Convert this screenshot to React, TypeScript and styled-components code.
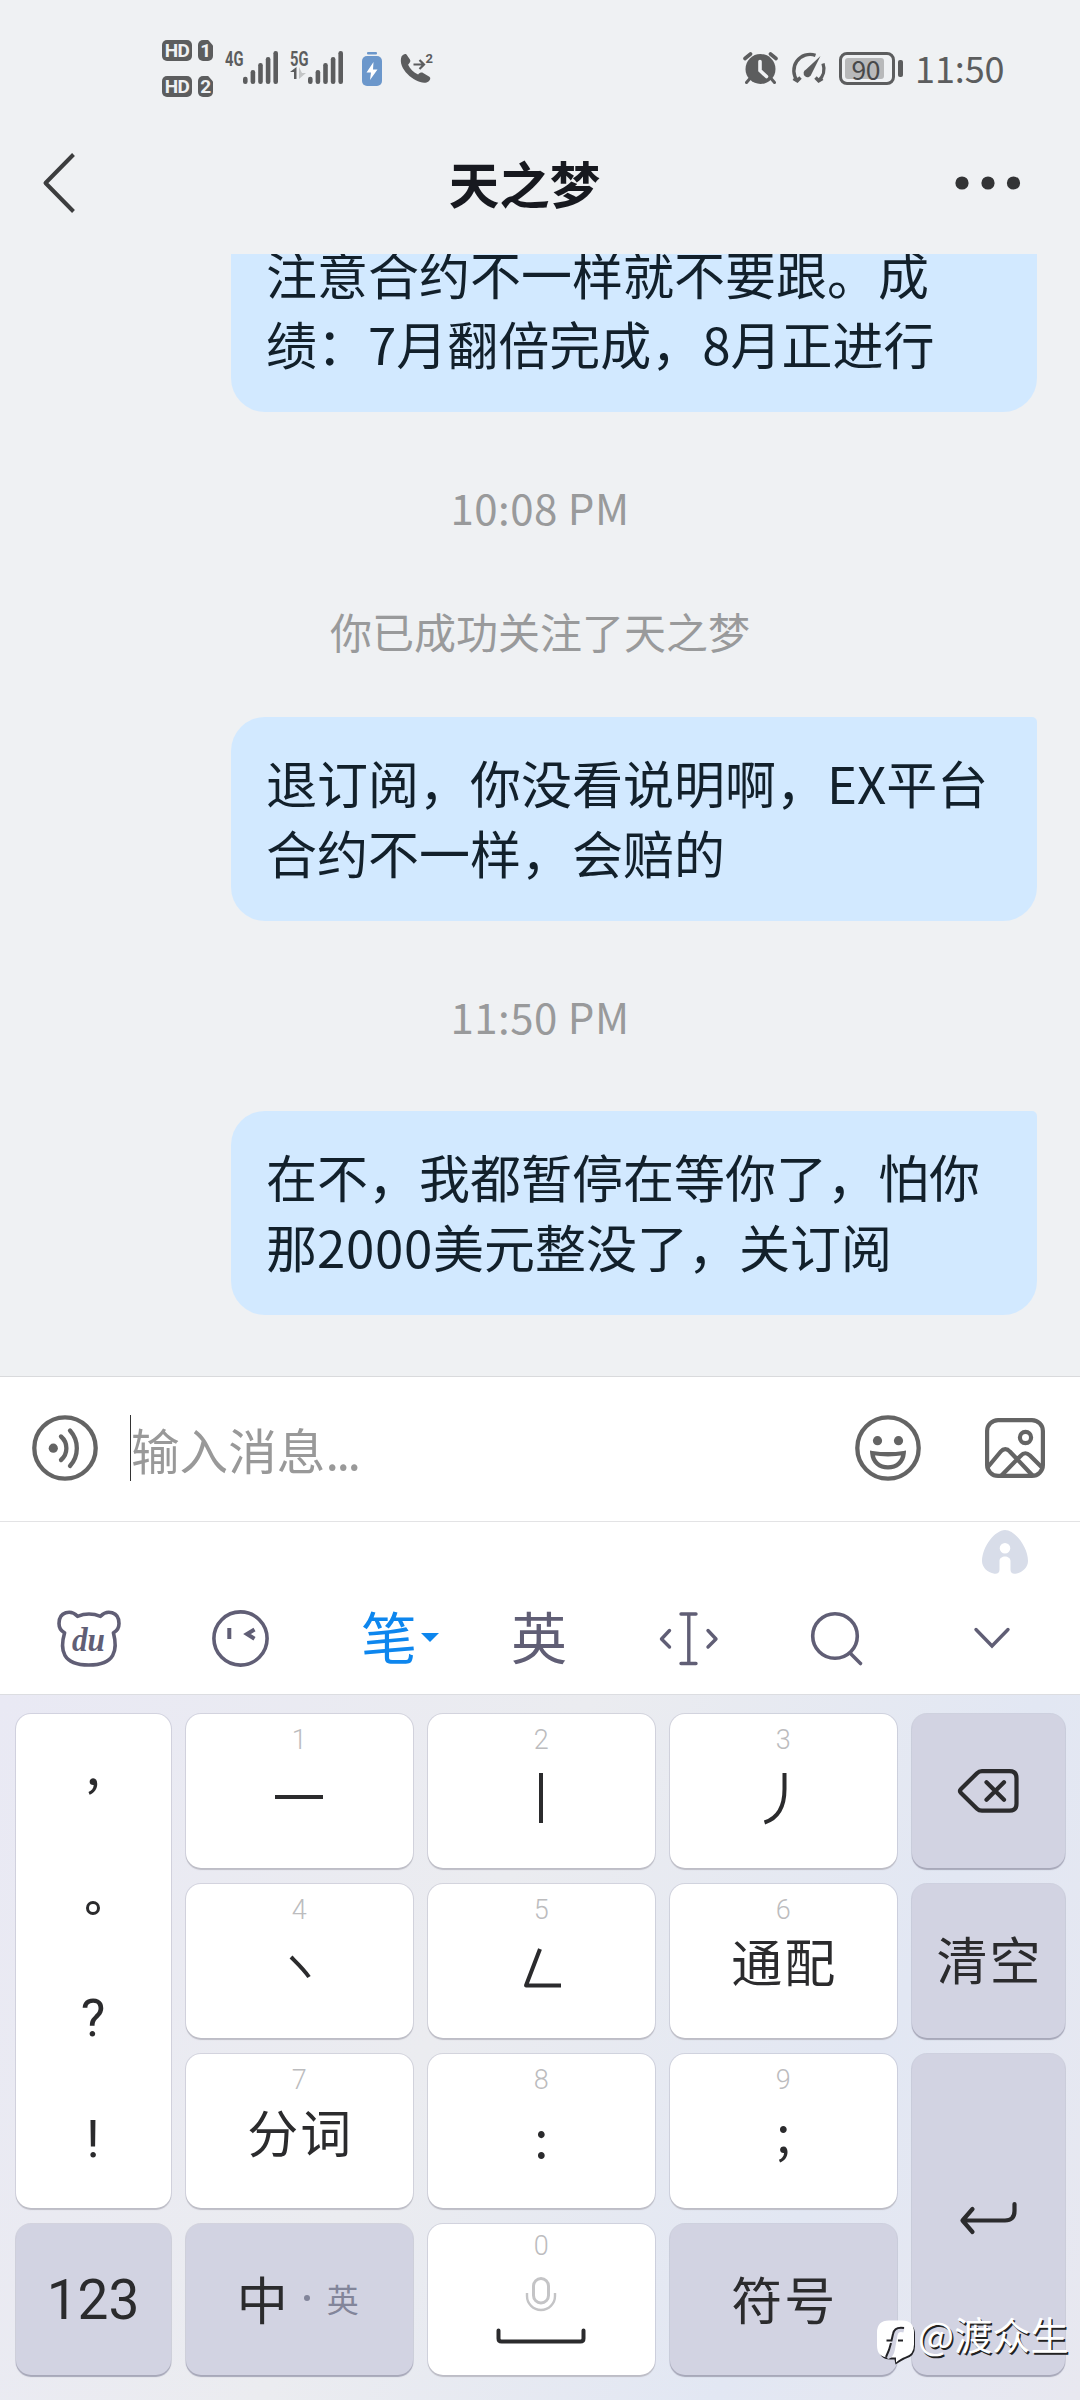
import React from "react";
import styled, { createGlobalStyle } from "styled-components";

const sans = `"Noto Sans CJK SC", "Noto Sans", sans-serif`;
const latin = `Roboto, "Noto Sans CJK SC", sans-serif`;
const grey = "#5c5d5e";
const slate = "#605e75";
const ink = "#2b2b2d";

const GlobalStyle = createGlobalStyle`
  * { box-sizing: border-box; }
  body { margin: 0; background: #eff1f3; }
  svg { display: block; flex: none; overflow: visible; }
`;

const Screen = styled.main`
  width: 1080px;
  height: 2400px;
  display: flex;
  flex-direction: column;
  overflow: hidden;
  position: relative;
  background: #eff1f3;
  font-family: ${sans};
`;

/* ---------- status bar ---------- */

const StatusBar = styled.header`
  height: 110px;
  flex: none;
  display: flex;
  justify-content: space-between;
  padding: 40px 79px 0 162px;
`;

const StatusGroup = styled.div`
  display: flex;
  align-items: flex-start;
`;

const SimColumn = styled.div`
  display: flex;
  flex-direction: column;
  gap: 15px;
  margin-right: 12px;
`;

const SimRow = styled.div`
  display: flex;
  gap: 6px;
  height: 21px;
`;

const Badge = styled.span<{ $w: number; $cut?: boolean }>`
  width: ${(p) => p.$w}px;
  height: 21px;
  border-radius: 5px;
  background: ${grey};
  color: #eff1f3;
  font: 700 19px/21.5px ${latin};
  display: flex;
  justify-content: center;
  letter-spacing: -0.6px;
  clip-path: ${(p) => (p.$cut ? "polygon(0 0, 68% 0, 100% 26%, 100% 100%, 0 100%)" : "none")};
`;

const Network = styled.div<{ $gap: number }>`
  display: flex;
  margin: 11px ${(p) => p.$gap}px 0 0;
`;

const NetLabel = styled.div<{ $w: number }>`
  width: ${(p) => p.$w}px;
  height: 33px;
  font: 700 21px/16px ${latin};
  color: ${grey};
`;

const Squeeze = styled.span`
  display: inline-block;
  transform: scaleX(0.7);
  transform-origin: left;
`;

const StatusIcon = styled.div<{ $top: number; $gap: number }>`
  margin: ${(p) => p.$top}px ${(p) => p.$gap}px 0 0;
`;

const Battery = styled.div`
  display: flex;
  align-items: center;
  gap: 3px;
  margin: 12px 12px 0 0;
  &::after {
    content: "";
    width: 5px;
    height: 17px;
    border-radius: 2px;
    background: ${grey};
  }
`;

const BatteryBody = styled.div`
  width: 56px;
  height: 33px;
  padding: 3px;
  border: 3px solid ${grey};
  border-radius: 8px;
`;

const BatteryLevel = styled.div`
  width: 39px;
  height: 21px;
  border-radius: 3px;
  background: #b8b9ba;
  color: #48494a;
  font: 400 26.5px/21px ${sans};
  text-align: right;
  padding-right: 4px;
  letter-spacing: -0.5px;
`;

const Clock = styled.time`
  color: ${grey};
  font: 400 36px/36px ${sans};
  margin-top: 9px;
  width: 86px;
  letter-spacing: -0.1px;
  white-space: nowrap;
`;

/* ---------- chat ---------- */

const TitleBar = styled.nav`
  height: 144px;
  flex: none;
  display: flex;
  justify-content: space-between;
  padding: 0 63px 0 43px;
`;

const NavIcon = styled.div`
  width: 60px;
  margin-top: 43px;
  display: flex;
`;

const Title = styled.h1`
  margin: 36px 11px 0 0;
  color: #17191f;
  font: 700 50.5px/72px ${sans};
`;

const Chat = styled.section`
  height: 1122px;
  flex: none;
  display: flex;
  flex-direction: column;
  justify-content: flex-end;
  overflow: hidden;
  padding: 0 43px 61px 231px;
`;

const Bubble = styled.p`
  width: 806px;
  height: 204px;
  flex: none;
  margin: 0;
  padding: 30px 36px 34px 35px;
  border-radius: 34px 5px 34px 34px;
  background: #d2e9ff;
  color: #12202b;
  font: 400 51px/70px ${sans};
  white-space: nowrap;
`;

const Amount = styled.span`
  letter-spacing: 0.7px;
`;

const Notice = styled.div<{ $top: number; $bottom: number; $track?: number }>`
  width: 1080px;
  flex: none;
  margin: ${(p) => p.$top}px 0 ${(p) => p.$bottom}px -231px;
  text-align: center;
  color: #999a9b;
  font: 400 42px/50px ${sans};
  letter-spacing: ${(p) => p.$track ?? 0}px;
`;

/* ---------- composer ---------- */

const Composer = styled.section`
  height: 146px;
  flex: none;
  display: flex;
  align-items: center;
  padding: 0 35px 2px 32px;
  border-top: 1px solid #d9dadc;
  border-bottom: 1px solid #e3e3e5;
  background: #fff;
`;

const Field = styled.div`
  flex: 1;
  height: 66px;
  margin-left: 32px;
  border-left: 1.5px solid #333;
  color: #999;
  font: 400 48.6px/68px ${sans};
  white-space: nowrap;
`;

const Ellipsis = styled.span`
  letter-spacing: -2.5px;
`;

const ComposerActions = styled.div`
  display: flex;
  align-items: center;
  gap: 64px;
`;

/* ---------- keyboard ---------- */

const AssistRow = styled.div`
  height: 62px;
  flex: none;
  display: flex;
  justify-content: flex-end;
  padding: 8px 52px 0 0;
  background: #fff;
`;

const Tools = styled.div`
  height: 111px;
  flex: none;
  display: flex;
  align-items: flex-start;
  padding: 26px 0 0 57px;
  border-bottom: 1px solid #dcdde1;
  background: #fff;
`;

const Tool = styled.div<{ $w: number; $top?: number }>`
  width: ${(p) => p.$w}px;
  padding-top: ${(p) => p.$top ?? 0}px;
  flex: none;
`;

const ToolText = styled.div<{ $w: number; $active?: boolean }>`
  width: ${(p) => p.$w}px;
  flex: none;
  display: flex;
  align-items: center;
  gap: 4px;
  color: ${(p) => (p.$active ? "#0d86ee" : slate)};
  font: 400 56px/56px ${sans};
  margin-top: -3px;
`;

const TriangleSlot = styled.div`
  padding-top: 4px;
`;

const Keyboard = styled.section`
  flex: 1;
  display: grid;
  grid-template-columns: 155px repeat(3, 226.5px) 153px;
  grid-template-rows: 154px 154px 154px 151px;
  gap: 16px 15.5px;
  padding: 19px 0 0 15.5px;
  background: linear-gradient(115deg, #e9e9f4 0%, #ebecf0 42%, #e2e7f3 74%, #e8e8f0 100%);
`;

const KeyBase = styled.div<{ $dark?: boolean; $rows?: number }>`
  grid-row: span ${(p) => p.$rows ?? 1};
  border-radius: 15px;
  background: ${(p) => (p.$dark ? "#d2d3e2" : "#fff")};
  box-shadow: 0 2px 1px ${(p) => (p.$dark ? "#a7a8b9" : "#bdbdc6")}, 0 0 0 1px rgba(150, 152, 172, 0.28);
  color: ${ink};
`;

const NumberKey = styled(KeyBase)<{ $pad?: number }>`
  display: flex;
  flex-direction: column;
  align-items: center;
  padding-top: ${(p) => p.$pad ?? 8}px;
`;

const FunctionKey = styled(KeyBase)<{ $nudge?: number; $right?: number; $lift?: number }>`
  display: flex;
  align-items: center;
  justify-content: center;
  padding: ${(p) => p.$nudge ?? 0}px ${(p) => p.$right ?? 0}px ${(p) => p.$lift ?? 0}px 0;
`;

const Digit = styled.span`
  height: 36px;
  color: #bcbcbe;
  font: 300 27px/36px ${latin};
`;

const Label = styled.span<{ $drop?: number }>`
  font: 400 51px/64px ${sans};
  letter-spacing: 2px;
  margin: ${(p) => p.$drop ?? 0}px -2px 0 0;
  white-space: nowrap;
`;

const StrokeSlot = styled.div`
  margin-top: 13px;
`;

const SpaceSlot = styled.div`
  margin-top: 9px;
`;

const Numeric = styled.span`
  font: 400 55px/64px ${latin};
`;

const Punctuation = styled(KeyBase)`
  display: flex;
  flex-direction: column;
  align-items: center;
`;

const Mark = styled.span<{ $top: number; $cjk?: boolean }>`
  height: 60px;
  margin-top: ${(p) => p.$top}px;
  font: 400 52px/60px ${(p) => (p.$cjk ? sans : latin)};
`;

const Sub = styled.span`
  color: #82859a;
  font: 400 32px/64px ${sans};
`;

const Dot = styled.i`
  width: 6px;
  height: 6px;
  border-radius: 50%;
  margin: 0 17px 0 16px;
  background: #82859a;
`;

const Watermark = styled.div`
  position: absolute;
  left: 877px;
  top: 2309px;
  display: flex;
  align-items: flex-start;
  gap: 4px;
  color: #fff;
  font: 400 38.2px/50px ${sans};
  text-shadow: 1.5px 1.5px 0.5px #222;
  white-space: nowrap;
`;

const LogoSlot = styled.div`
  padding-top: 11px;
`;

/* ---------- drawings ---------- */

const Bars = () => (
  <svg width="35" height="33" fill={grey}>
    {[25.7, 19, 12, 6, 0].map((y, i) => (
      <rect key={i} x={i * 7.6} y={y} width="4.6" height={33 - y} rx="2.2" />
    ))}
  </svg>
);

const PowerCell = () => (
  <svg width="20" height="34" viewBox="0 0 20 34">
    <rect x="5" width="10" height="2.6" rx="1" fill="#6b97cb" />
    <rect y="4" width="20" height="30" rx="5" fill="#6b97cb" />
    <path d="M11.5 10 4.5 20.5H9L8 28l7.5-10.5H11z" fill="#fff" />
  </svg>
);

const CallForward = () => (
  <svg width="32" height="32" viewBox="0 0 32 32">
    <path d="M1.5 3.5C3 1.5 5 .5 6.5 1.5l3.6 5.2c.8 1.6-.2 3-2 5 2 4.300 5.500 7.800 10 9.800 1.800-1.800 3.400-2.400 5-1.500l6.300 3.700c1.600 1.200.9 3-.9 4.800C20.500 34.500-3.500 17.500 1.500 3.500z" fill={grey} />
    <path d="M13.500 11.500h10M19.500 7l4.500 4.500-4.500 4.500" fill="none" stroke={grey} strokeWidth="2.200" />
    <text x="25.500" y="10" fontFamily="Roboto" fontWeight="700" fontSize="13" fill={grey}>2</text>
  </svg>
);

const Alarm = () => (
  <svg width="35" height="32" viewBox="0 0 35 32">
    <circle cx="17.500" cy="17" r="15" fill={grey} />
    <path d="M2 6.500 7.500 2M33 6.500 27.500 2" stroke={grey} strokeWidth="3.600" strokeLinecap="round" />
    <path d="m6.500 27-3 3.500M28.500 27l3 3.500" stroke={grey} strokeWidth="3" strokeLinecap="round" />
    <path d="M17 9.500v9l6.500 6" fill="none" stroke="#eff1f3" strokeWidth="3.600" strokeLinecap="round" />
  </svg>
);

const Gauge = () => (
  <svg width="36" height="31" viewBox="0 0 36 31" fill="none" stroke={grey} strokeWidth="3.400">
    <path d="M25.500 3.300A16.300 16.300 0 0 0 7.500 29M10.500 25.500 7.300 28.800 3.500 26.500M33 11.500A16.300 16.300 0 0 1 28.500 29M25.500 25.500 28.700 28.800 32.500 26.500" />
    <path d="M30.500 4 16 17.500a4 4 0 1 0 5.500 4.500z" fill={grey} stroke="none" />
  </svg>
);

const Voice = () => (
  <svg width="66" height="66" viewBox="0 0 66 66" fill="none" stroke="#646464" strokeWidth="4.300">
    <circle cx="33" cy="33" r="30.700" />
    <circle cx="21.300" cy="33.200" r="4.600" fill="#646464" stroke="none" />
    <path d="M29 21.500a15.500 15.500 0 0 1 0 23.500M38 15.500a26.500 26.500 0 0 1 0 35.500" strokeLinecap="round" />
  </svg>
);

const Smile = () => (
  <svg width="66" height="66" viewBox="0 0 66 66" fill="none" stroke="#646464" strokeWidth="4.300">
    <circle cx="33" cy="33" r="30.700" />
    <circle cx="22.500" cy="25.700" r="4.600" fill="#646464" stroke="none" />
    <circle cx="43.500" cy="25.700" r="4.600" fill="#646464" stroke="none" />
    <path d="M17.300 38c10 1.600 21.400 1.600 31.400 0-.7 9-7.200 14.300-15.700 14.300S18 47 17.300 38z" />
  </svg>
);

const Picture = () => (
  <svg width="60" height="60" viewBox="0 0 60 60" fill="none" stroke="#646464" strokeWidth="4.200">
    <rect x="2.100" y="2.100" width="55.800" height="55.800" rx="11" />
    <circle cx="40.500" cy="19.500" r="5.600" />
    <path d="M2.500 49.500 15.800 33.500c2.700-3.200 6.300-3.200 9 0L48 58M16 58 35.500 38c3.300-3.600 6-3.700 9.500-.5L57.500 50" />
  </svg>
);

const Assistant = () => (
  <svg width="46" height="44" viewBox="0 0 46 44">
    <path
      fillRule="evenodd"
      fill="#d8dde9"
      d="M23 0C33 0 46 17 46 31c0 6-5 11.500-12.500 12.800-3 .4-5-1-5-4V31c0-6-11-6-11 0v8.800c0 3-2 4.400-5 4C5 42.500 0 37 0 31 0 17 13 0 23 0zM23 13a5.300 5.300 0 1 0 0 10.600A5.300 5.300 0 0 0 23 13z"
    />
  </svg>
);

const Bear = () => (
  <svg width="64" height="57" viewBox="0 0 64 57" fill="none" stroke={slate} strokeWidth="3.600" strokeLinecap="round" strokeLinejoin="round">
    <path d="M20.500 6.300C14-.6 2 1.500 2 13.500c0 4.500 2 7.500 5.600 9.300C2.500 40 5.500 55 31.800 55S61 40 56.400 22.800C60 21 62 18 62 13.500 62 1.500 50-.6 43.500 6.300c-7.500-3-15.500-3-23 0z" />
    <text x="31.500" y="41" textAnchor="middle" fontFamily="Liberation Serif" fontStyle="italic" fontWeight="700" fontSize="34" textLength="33" lengthAdjust="spacingAndGlyphs" fill={slate} stroke="none">du</text>
  </svg>
);

const Wink = () => (
  <svg width="57" height="57" viewBox="0 0 57 57" fill="none" stroke={slate} strokeWidth="3.600">
    <circle cx="28.500" cy="28.500" r="26.600" />
    <path d="M17.300 18v11M42.500 19.500 35 24l7.500 4.700" strokeWidth="4" />
  </svg>
);

const CursorMove = () => (
  <svg width="58" height="54" viewBox="0 0 58 54" fill="none" stroke={slate} strokeWidth="3.400" strokeLinecap="round" strokeLinejoin="round">
    <path d="M21 2h15M21 51.500h15M28.800 2v49.500M9.500 18.500 1.500 27l8 8M48 18.500l8 8.500-8 8" />
  </svg>
);

const Search = () => (
  <svg width="52" height="54" viewBox="0 0 52 54" fill="none" stroke={slate} strokeWidth="3.600" strokeLinecap="round">
    <circle cx="24" cy="25" r="22.300" />
    <path d="m39.500 42.500 10 10" />
  </svg>
);

const Collapse = () => (
  <svg width="36" height="20" viewBox="0 0 36 20" fill="none" stroke={slate} strokeWidth="3.400" strokeLinecap="round">
    <path d="m2 1.500 16 16.500 16-16.500" />
  </svg>
);

const Backspace = () => (
  <svg width="61" height="44" viewBox="0 0 61 44" fill="none" stroke={ink} strokeWidth="4.200" strokeLinejoin="round" strokeLinecap="round">
    <path d="M24 2.200h27.500q7 0 7 7v25.500q0 7-7 7H24q-3 0-5-2L3 24q-2-2 0-4L19 4.200q2-2 5-2zM28.500 13.300l17.500 17.500M46 13.300 28.500 30.800" />
  </svg>
);

const Enter = () => (
  <svg width="57" height="32" viewBox="0 0 57 32" fill="none" stroke={ink} strokeWidth="4.200" strokeLinecap="round" strokeLinejoin="round">
    <path d="M54.500 2v7q0 9.500-9.500 9.500H3M12.500 7 2.500 18.500 12.500 30" />
  </svg>
);

/* Stroke-input shapes share one 60px box centred in their key. */
const strokes: Record<string, string> = {
  heng: "M6 26h48",
  shu: "M30 2v50",
  pie: "M31.500 2v16c0 18-6 29-20 33.500",
  dian: "M22 16c6 6 13 12.500 18 20",
  zhe: "M29 8 15 44.500h35",
};

const Stroke = ({ kind }: { kind: string }) => (
  <StrokeSlot>
    <svg width="60" height="60" viewBox="0 0 60 60" fill="none" stroke={ink} strokeWidth="4">
      <path d={strokes[kind]} strokeLinejoin="round" />
    </svg>
  </StrokeSlot>
);

const SpaceMark = () => (
  <svg width="90" height="70" viewBox="0 0 90 70" fill="none">
    <rect x="37.500" y="5.500" width="15" height="24.500" rx="7.500" stroke="#c4c4c6" strokeWidth="3" />
    <path d="M31 20v3a14 14 0 0 0 28 0v-3" stroke="#c4c4c6" strokeWidth="2.400" />
    <path d="M2.500 57.500v8q0 3 3 3h79q3 0 3-3v-8" stroke={ink} strokeWidth="4" strokeLinecap="round" />
  </svg>
);

const FollowLogo = () => (
  <svg width="37" height="44" viewBox="0 0 37 44">
    <path d="M13 2.500h13q12 0 12 12v12q0 10-10 12.500-4 2-9.500 5.500l-1-5H13q-11 0-11-12v-13q0-12 11-12z" fill="#222226" />
    <path d="M12 0.500h13q12 0 12 12v12q0 10-9 12.500-4 1-9 5.500v-5h-7q-12 0-12-12v-13q0-12 12-12z" fill="#fff" />
    <path d="M27 10c-6-1.500-8 1-9 5l-2.500 14c-.7 4-2.500 7-5.500 8" stroke="#d2d3e2" strokeWidth="5" fill="none" />
    <path d="M27 8c-6-1-10 1-11 6l-1.500 6.500H9.500M21 20.500h5M14 23l-2 7-3 7" stroke="#222226" strokeWidth="2" fill="none" />
  </svg>
);

/* ---------- screen ---------- */

type KeySpec = { digit: string; label?: string; stroke?: string; drop?: number };

const Pad = ({ digit, label, stroke, drop }: KeySpec) => (
  <NumberKey>
    <Digit>{digit}</Digit>
    {stroke ? <Stroke kind={stroke} /> : <Label $drop={drop}>{label}</Label>}
  </NumberKey>
);

const rowOne: KeySpec[] = [
  { digit: "1", stroke: "heng" },
  { digit: "2", stroke: "shu" },
  { digit: "3", stroke: "pie" },
];
const rowTwo: KeySpec[] = [
  { digit: "4", stroke: "dian" },
  { digit: "5", stroke: "zhe" },
  { digit: "6", label: "通配" },
];
const rowThree: KeySpec[] = [
  { digit: "7", label: "分词", drop: 1 },
  { digit: "8", label: ":", drop: 6 },
  { digit: "9", label: ";", drop: 1 },
];

export default function App() {
  return (
    <Screen>
      <GlobalStyle />
      <StatusBar>
        <StatusGroup>
          <SimColumn>
            <SimRow><Badge $w={30}>HD</Badge><Badge $w={15} $cut>1</Badge></SimRow>
            <SimRow><Badge $w={30}>HD</Badge><Badge $w={15} $cut>2</Badge></SimRow>
          </SimColumn>
          <Network $gap={12}>
            <NetLabel $w={18}><Squeeze>4G</Squeeze></NetLabel>
            <Bars />
          </Network>
          <Network $gap={19}>
            <NetLabel $w={18}>
              <Squeeze>5G</Squeeze>
              <svg width="17" height="12" viewBox="0 0 17 12">
                <path d="M6.500 0v12H4V5H0z" fill={grey} />
                <path d="M9 0v12l7-6h-4z" fill="#c3c5c6" />
              </svg>
            </NetLabel>
            <Bars />
          </Network>
          <StatusIcon $top={12} $gap={18}><PowerCell /></StatusIcon>
          <StatusIcon $top={13} $gap={0}><CallForward /></StatusIcon>
        </StatusGroup>
        <StatusGroup>
          <StatusIcon $top={12} $gap={12}><Alarm /></StatusIcon>
          <StatusIcon $top={12} $gap={13}><Gauge /></StatusIcon>
          <Battery><BatteryBody><BatteryLevel>90</BatteryLevel></BatteryBody></Battery>
          <Clock>11:50</Clock>
        </StatusGroup>
      </StatusBar>

      <TitleBar>
        <NavIcon>
          <svg width="32" height="60" viewBox="0 0 32 60" fill="none" stroke="#3c3d3e" strokeWidth="4">
            <path d="M30.500 1.500 2.500 30l28 28.500" strokeLinejoin="round" />
          </svg>
        </NavIcon>
        <Title>天之梦</Title>
        <NavIcon>
          <svg width="66" height="60" fill="#333435">
            <circle cx="5" cy="30" r="6.600" />
            <circle cx="31" cy="30" r="6.600" />
            <circle cx="56.500" cy="30" r="6.600" />
          </svg>
        </NavIcon>
      </TitleBar>

      <Chat>
        <Bubble>注意合约不一样就不要跟。成<br />绩：7月翻倍完成，8月正进行</Bubble>
        <Notice $top={70} $bottom={74} $track={0.5}>10:08 PM</Notice>
        <Notice $top={0} $bottom={61}>你已成功关注了天之梦</Notice>
        <Bubble>退订阅，你没看说明啊，EX平台<br />合约不一样，会赔的</Bubble>
        <Notice $top={70} $bottom={70} $track={0.5}>11:50 PM</Notice>
        <Bubble>在不，我都暂停在等你了，怕你<br />那<Amount>2000</Amount>美元整没了，关订阅</Bubble>
      </Chat>

      <Composer>
        <Voice />
        <Field>输入消息<Ellipsis>...</Ellipsis></Field>
        <ComposerActions>
          <Smile />
          <Picture />
        </ComposerActions>
      </Composer>

      <AssistRow><Assistant /></AssistRow>
      <Tools>
        <Tool $w={155}><Bear /></Tool>
        <Tool $w={149}><Wink /></Tool>
        <ToolText $w={150} $active>
          笔
          <TriangleSlot>
            <svg width="18" height="9"><path d="M0 0h18l-9 9z" fill="#0d86ee" /></svg>
          </TriangleSlot>
        </ToolText>
        <ToolText $w={149}>英</ToolText>
        <Tool $w={151} $top={2}><CursorMove /></Tool>
        <Tool $w={163} $top={1}><Search /></Tool>
        <Tool $w={36} $top={18}><Collapse /></Tool>
      </Tools>

      <Keyboard>
        <Punctuation $rows={3}>
          <Mark $top={19} $cjk>,</Mark>
          <Mark $top={74}>
            <svg width="14" height="60"><circle cx="7" cy="41" r="5.500" fill="none" stroke={ink} strokeWidth="3" /></svg>
          </Mark>
          <Mark $top={62}>?</Mark>
          <Mark $top={61}>!</Mark>
        </Punctuation>
        {rowOne.map((k) => <Pad key={k.digit} {...k} />)}
        <FunctionKey $dark><Backspace /></FunctionKey>
        {rowTwo.map((k) => <Pad key={k.digit} {...k} />)}
        <FunctionKey $dark $lift={6}><Label>清空</Label></FunctionKey>
        {rowThree.map((k) => <Pad key={k.digit} {...k} />)}
        <FunctionKey $dark $rows={2} $nudge={6}><Enter /></FunctionKey>
        <FunctionKey $dark $nudge={1}><Numeric>123</Numeric></FunctionKey>
        <FunctionKey $dark $lift={4} $right={3}>
          <Label>中</Label>
          <Dot />
          <Sub>英</Sub>
        </FunctionKey>
        <NumberKey $pad={4}>
          <Digit>0</Digit>
          <SpaceSlot><SpaceMark /></SpaceSlot>
        </NumberKey>
        <FunctionKey $dark $lift={4}><Label>符号</Label></FunctionKey>
      </Keyboard>

      <Watermark>
        <LogoSlot><FollowLogo /></LogoSlot>
        <span>@渡众生</span>
      </Watermark>
    </Screen>
  );
}
